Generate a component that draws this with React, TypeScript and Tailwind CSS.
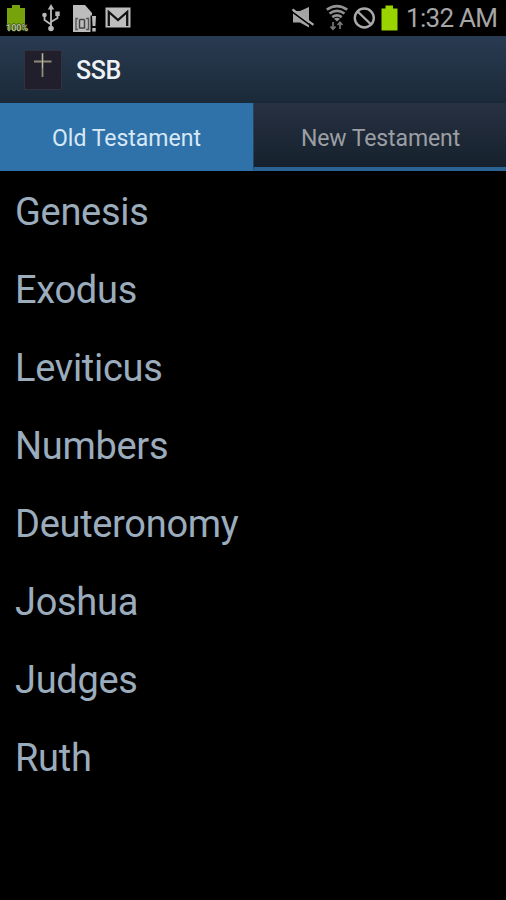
const books = ['Genesis', 'Exodus', 'Leviticus', 'Numbers', 'Deuteronomy', 'Joshua', 'Judges', 'Ruth'];

function LeftIcons() {
  return (
    <svg width="140" height="36" viewBox="0 0 140 36" className="block shrink-0">
      <path d="M12 5h8v3h5v22H7V8h5z" fill="#76a30a" />
      <text x="6" y="30.500" fontSize="9" fontWeight="700" fontFamily="Roboto, sans-serif" textLength="22" lengthAdjust="spacingAndGlyphs" fill="#b4c09c" stroke="#35420c" strokeWidth="1.2" paintOrder="stroke">100%</text>
      <g fill="none" stroke="#b9b9b9" strokeWidth="1.8">
        <path d="M51 8v20M51 24.500l-6.500-4.500v-4.500M51 22l6.500-4v-4" />
      </g>
      <g fill="#b9b9b9">
        <path d="M51 4l3.200 5.500h-6.400z" />
        <circle cx="51" cy="28.500" r="2.800" />
        <circle cx="44.500" cy="15" r="2.300" />
        <path d="M55.300 11.500h4.400v4.500h-4.400z" />
      </g>
      <path d="M73 5h12l7 8v3h4v16H73z" fill="#bcbcbc" />
      <path d="M90.500 15.500h6v17h-6z" fill="#080808" />
      <path d="M92 16h4l-.6 10h-2.800zM92.300 28h3.400v3.500h-3.400z" fill="#bcbcbc" />
      <path d="M78 18.500h-2v11h2M86 18.500h2.500v11h-2.500" fill="none" stroke="#555" strokeWidth="1.400" />
      <path d="M79.500 19.500v9M84.500 19.500v9M79.500 19.500h5M79.500 28h5" fill="none" stroke="#444" strokeWidth="1.500" />
      <path d="M105.500 7.500h25v20h-25z" fill="#bebebe" />
      <path d="M108.800 26V12L118 20l9.200-8V26" fill="none" stroke="#111" strokeWidth="2.300" />
    </svg>
  );
}

function RightIcons() {
  return (
    <svg width="119" height="36" viewBox="281 0 119 36" className="block shrink-0">
      <path d="M293 11h7l9-4v20.500l-9-5h-7z" fill="#a4a4a4" />
      <path d="M291.500 11.300l21 15.500" stroke="#000" strokeWidth="1.600" />
      <path d="M292.500 9.300l21 15.500" stroke="#aaa" strokeWidth="2.200" />
      <g fill="none" stroke="#929292" strokeWidth="2.700">
        <path d="M326.800 9.700q10.200-7.200 20.400 0" />
        <path d="M329.500 13.500q7.500-5.400 15 0" />
        <path d="M332.300 17.200q4.700-3.500 9.400 0" />
      </g>
      <path d="M334 18.800q3-2 6 0l-3 2.700z" fill="#929292" />
      <path d="M333 22v7M330.500 26.500l2.500 2.800 2.500-2.800M340 29v-6M337.500 25l2.500-2.800 2.500 2.800" fill="none" stroke="#777" strokeWidth="1.700" />
      <circle cx="364.300" cy="18" r="9.500" fill="none" stroke="#aaa" strokeWidth="2.400" />
      <path d="M357.600 11.500l13.500 13" stroke="#aaa" strokeWidth="2.400" />
      <path d="M385.500 5.500h7.500v3h4.500v22h-16v-22h4z" fill="#99d400" />
    </svg>
  );
}

export default function App() {
  return (
    <div className="flex h-[900px] w-[506px] flex-col overflow-hidden bg-black font-['Roboto',sans-serif]">
      <div className="flex h-9 shrink-0 items-start justify-between">
        <LeftIcons />
        <div className="flex">
          <RightIcons />
          <div className="w-[106px] whitespace-nowrap pl-[6px] text-[26px] leading-9 tracking-[-0.7px] text-[#a6a6a6]">1:32 AM</div>
        </div>
      </div>
      <header className="flex h-[67px] shrink-0 items-center border-b border-[#1a2938] bg-linear-to-b from-[#293b52] to-[#1b2a39] pl-6 pt-px">
        <svg width="38" height="40" viewBox="0 0 38 40" className="block">
          <path d="M.5 .5h37v39H.5z" fill="#201f2b" stroke="#303240" />
          <path d="M18.500 3v24M10 11.500h17.500" stroke="#8e8a78" strokeWidth="1.800" />
          <path d="M18.500 4v14" stroke="#bbb8a4" strokeWidth="1" />
        </svg>
        <h1 className="pl-[14px] pt-[3px] text-[25px] font-medium leading-8 tracking-[-0.4px] text-[#eef2f6]">SSB</h1>
      </header>
      <nav className="flex h-[68px] shrink-0">
        <div className="flex w-[253px] items-center justify-center bg-[#2f72a9] pt-[4px] text-[23px] text-[#d8e8f6]">Old Testament</div>
        <div className="flex w-[253px] items-center justify-center border-b-4 border-l border-b-[#2b6494] border-l-[#27445f] bg-linear-to-b from-[#273142] to-[#16212d] pl-px pt-[8px] text-[23px] tracking-[-0.1px] text-[#9b9fa4]">New Testament</div>
      </nav>
      <ul className="flex flex-col">
        {books.map((name) => (
          <li key={name} className="flex h-[78px] items-center pl-[15px] pt-[3px] text-[38px] leading-none tracking-[-0.3px] text-[#9bacbd]">
            {name}
          </li>
        ))}
      </ul>
    </div>
  );
}
